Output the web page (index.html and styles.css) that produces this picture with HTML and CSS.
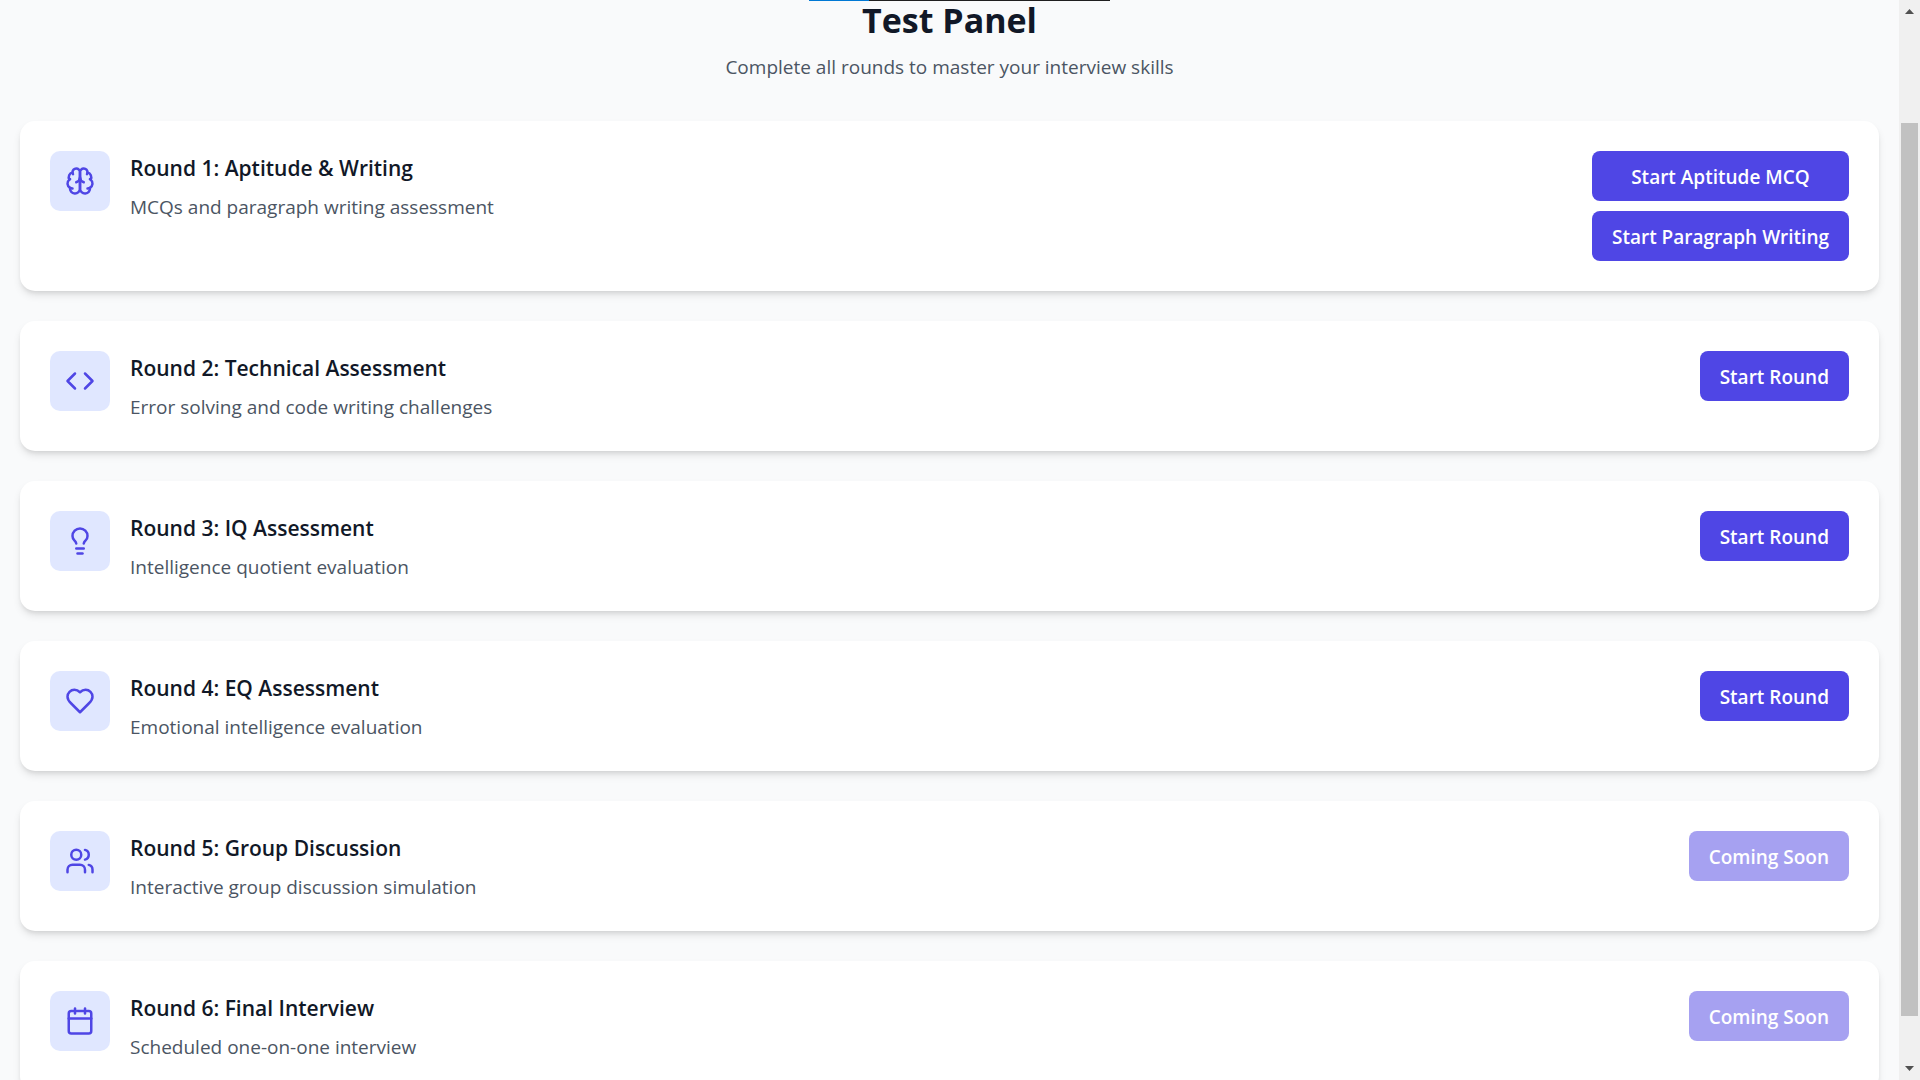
FILE: index.html
```
<!DOCTYPE html>
<html lang="en">
  <head>
    <meta charset="UTF-8" />
    <meta name="viewport" content="width=device-width, initial-scale=1.0" />
    <title>Test Panel</title>
    <link rel="stylesheet" href="styles.css">
  </head>
  <body>
    <div class="top-strip"></div>
    <main class="page">
      <header class="page-header">
        <h1>Test Panel</h1>
        <p>Complete all rounds to master your interview skills</p>
      </header>

      <div class="rounds">
        <section class="card">
          <div class="icon-box">
            <svg class="icon" viewBox="0 0 24 24">
              <path d="M12 5a3 3 0 1 0-5.997.125 4 4 0 0 0-2.526 5.77 4 4 0 0 0 .556 6.588A4 4 0 1 0 12 18Z" />
              <path d="M12 5a3 3 0 1 1 5.997.125 4 4 0 0 1 2.526 5.77 4 4 0 0 1-.556 6.588A4 4 0 1 1 12 18Z" />
              <path d="M15 13a4.5 4.5 0 0 1-3-4 4.5 4.5 0 0 1-3 4" />
              <path d="M17.599 6.5a3 3 0 0 0 .399-1.375" />
              <path d="M6.003 5.125A3 3 0 0 0 6.401 6.5" />
              <path d="M3.477 10.896a4 4 0 0 1 .585-.396" />
              <path d="M19.938 10.5a4 4 0 0 1 .585.396" />
              <path d="M6 18a4 4 0 0 1-1.967-.516" />
              <path d="M19.967 17.484A4 4 0 0 1 18 18" />
            </svg>
          </div>
          <div class="info">
            <h2>Round 1: Aptitude &amp; Writing</h2>
            <p>MCQs and paragraph writing assessment</p>
          </div>
          <div class="actions">
            <button type="button" class="btn">Start Aptitude MCQ</button>
            <button type="button" class="btn">Start Paragraph Writing</button>
          </div>
        </section>

        <section class="card">
          <div class="icon-box">
            <svg class="icon" viewBox="0 0 24 24">
              <polyline points="16 18 22 12 16 6" />
              <polyline points="8 6 2 12 8 18" />
            </svg>
          </div>
          <div class="info">
            <h2>Round 2: Technical Assessment</h2>
            <p>Error solving and code writing challenges</p>
          </div>
          <div class="actions">
            <button type="button" class="btn">Start Round</button>
          </div>
        </section>

        <section class="card">
          <div class="icon-box">
            <svg class="icon" viewBox="0 0 24 24">
              <path d="M15 14c.2-1 .7-1.7 1.5-2.5 1-.9 1.5-2.2 1.5-3.5A6 6 0 0 0 6 8c0 1 .2 2.2 1.5 3.5.7.7 1.3 1.5 1.5 2.5" />
              <path d="M9 18h6" />
              <path d="M10 22h4" />
            </svg>
          </div>
          <div class="info">
            <h2>Round 3: IQ Assessment</h2>
            <p>Intelligence quotient evaluation</p>
          </div>
          <div class="actions">
            <button type="button" class="btn">Start Round</button>
          </div>
        </section>

        <section class="card">
          <div class="icon-box">
            <svg class="icon" viewBox="0 0 24 24">
              <path d="M19 14c1.49-1.46 3-3.21 3-5.5A5.5 5.5 0 0 0 16.5 3c-1.76 0-3 .5-4.5 2-1.5-1.5-2.74-2-4.5-2A5.5 5.5 0 0 0 2 8.5c0 2.3 1.5 4.05 3 5.5l7 7Z" />
            </svg>
          </div>
          <div class="info">
            <h2>Round 4: EQ Assessment</h2>
            <p>Emotional intelligence evaluation</p>
          </div>
          <div class="actions">
            <button type="button" class="btn">Start Round</button>
          </div>
        </section>

        <section class="card">
          <div class="icon-box">
            <svg class="icon" viewBox="0 0 24 24">
              <path d="M16 21v-2a4 4 0 0 0-4-4H6a4 4 0 0 0-4 4v2" />
              <circle cx="9" cy="7" r="4" />
              <path d="M22 21v-2a4 4 0 0 0-3-3.87" />
              <path d="M16 3.13a4 4 0 0 1 0 7.75" />
            </svg>
          </div>
          <div class="info">
            <h2>Round 5: Group Discussion</h2>
            <p>Interactive group discussion simulation</p>
          </div>
          <div class="actions">
            <button type="button" class="btn" disabled>Coming Soon</button>
          </div>
        </section>

        <section class="card">
          <div class="icon-box">
            <svg class="icon" viewBox="0 0 24 24">
              <path d="M8 2v4" />
              <path d="M16 2v4" />
              <rect x="3" y="4" width="18" height="18" rx="2" />
              <path d="M3 10h18" />
            </svg>
          </div>
          <div class="info">
            <h2>Round 6: Final Interview</h2>
            <p>Scheduled one-on-one interview</p>
          </div>
          <div class="actions">
            <button type="button" class="btn" disabled>Coming Soon</button>
          </div>
        </section>
      </div>
    </main>

    <div class="scrollbar" aria-hidden="true">
      <svg class="arrow" viewBox="0 0 9 5"><path d="M4.500 0L9 5H0z" /></svg>
      <div class="track">
        <div class="thumb"></div>
      </div>
      <svg class="arrow" viewBox="0 0 9 5"><path d="M0 0h9L4.500 5z" /></svg>
    </div>
  </body>
</html>
```

FILE: styles.css
```
* {
  box-sizing: border-box;
}

body {
  display: flex;
  height: 100vh;
  margin: 0;
  overflow: hidden;
  font-family: "Segoe UI", "Open Sans", "Noto Sans", sans-serif;
  font-size: 19px;
  line-height: 30px;
  background: #f9fafb;
  color: #111827;
}

h1,
h2,
p {
  margin: 0;
}

/* progress line over the top edge */
.top-strip {
  position: absolute;
  top: 0;
  left: 50%;
  width: 301px;
  height: 1px;
  margin-left: -151px;
  background: linear-gradient(to right, #0078d4 60px, #1f1f1f 60px);
}

.page {
  flex: 1;
  min-width: 0;
  padding: 0 20px;
}

.page-header {
  margin-bottom: 39px;
  text-align: center;
}

.page-header h1 {
  margin-bottom: 12px;
  font-size: 34px;
  font-weight: 700;
  line-height: 40px;
}

.page-header p,
.info p {
  color: #4b5563;
}

.rounds {
  display: flex;
  flex-direction: column;
  gap: 30px;
}

.card {
  display: flex;
  align-items: flex-start;
  gap: 20px;
  padding: 30px;
  background: #fff;
  border-radius: 15px;
  box-shadow: 0 5px 8px -1px rgba(0, 0, 0, 0.1),
    0 3px 5px -2px rgba(0, 0, 0, 0.1);
}

.icon-box {
  display: flex;
  padding: 15px;
  background: #e0e7ff;
  border-radius: 10px;
}

.icon {
  width: 30px;
  height: 30px;
  fill: none;
  stroke: #4f46e5;
  stroke-width: 2;
  stroke-linecap: round;
  stroke-linejoin: round;
}

.info {
  flex: 1;
}

.info h2 {
  margin-bottom: 7px;
  font-size: 21px;
  font-weight: 600;
  line-height: 35px;
}

.info p {
  line-height: 28px;
}

.actions {
  display: flex;
  flex-direction: column;
  gap: 10px;
}

.btn {
  padding: 11px 20px 9px;
  border: none;
  border-radius: 8px;
  background: #4f46e5;
  color: #fff;
  font: inherit;
  font-weight: 600;
  cursor: pointer;
}

.btn:hover {
  background: #4338ca;
}

.btn:disabled {
  background: #4f46e5;
  opacity: 0.5;
  cursor: not-allowed;
}

.scrollbar {
  display: flex;
  flex-direction: column;
  align-items: center;
  width: 21px;
  padding: 9px 2px;
  background: #f0f0f0;
}

.arrow {
  width: 9px;
  height: 5px;
  fill: #505050;
}

.track {
  flex: 1;
  width: 100%;
  padding: 7px 0;
}

.thumb {
  height: 86%;
  margin-top: 102px;
  background: #c1c1c1;
}
```
